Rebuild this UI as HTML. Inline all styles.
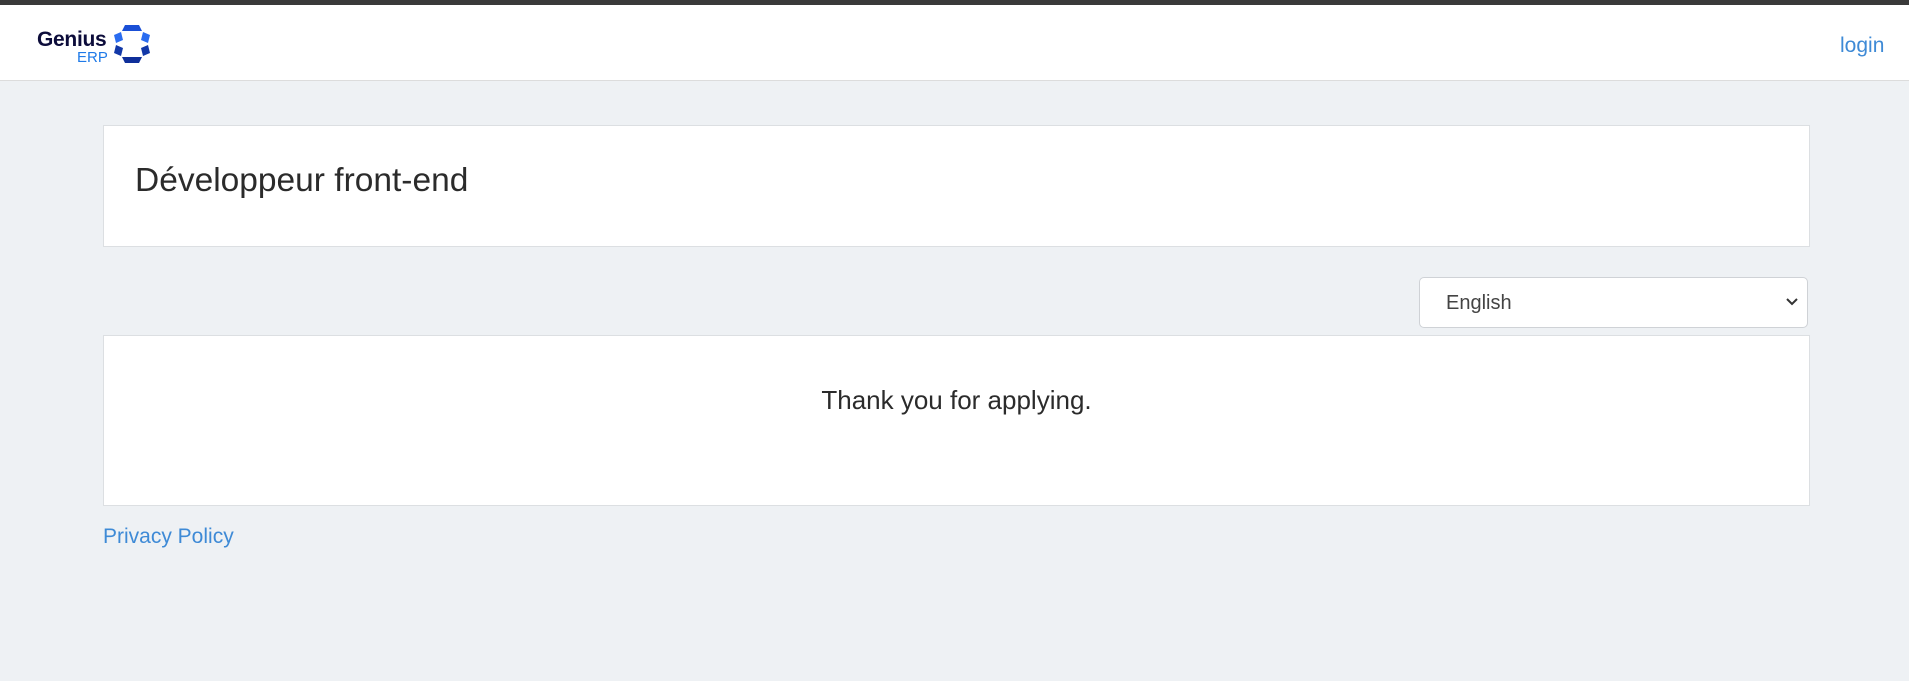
<!DOCTYPE html>
<html><head><meta charset="utf-8"><style>
*{box-sizing:border-box;margin:0;padding:0}
body{width:1909px;height:681px;background:#eef1f4;font-family:"Liberation Sans",sans-serif;color:#333;position:relative;overflow:hidden}
.top{position:absolute;left:0;top:0;width:1909px;height:5px;background:#3a3a3a}
.hdr{position:absolute;left:0;top:5px;width:1909px;height:76px;background:#fff;border-bottom:1px solid #dcdcdc}
.card{position:absolute;left:103px;width:1707px;background:#fff;border:1px solid #dcdfe2}
a{color:#3e8ad6;text-decoration:none}
</style></head><body>
<div class="top"></div>
<div class="hdr">
  <div style="position:absolute;left:37px;top:23px;font-weight:bold;font-size:21px;color:#0c0c3a;letter-spacing:-0.3px">Genius</div>
  <div style="position:absolute;left:77px;top:44px;font-size:15px;color:#1f7ae8">ERP</div>
  <svg style="position:absolute;left:112px;top:18px" width="40" height="42" viewBox="0 0 40 42">
    <g>
      <path d="M13 2 L27 2 L30 8 L10 8Z" fill="#1a4fd6"/>
      <path d="M13 40 L27 40 L30 34 L10 34Z" fill="#0f2f9a"/>
      <path d="M2 12 L9 9 L11 17 L4 20Z" fill="#2a6cf0"/>
      <path d="M38 12 L31 9 L29 17 L36 20Z" fill="#2a6cf0"/>
      <path d="M2 30 L9 33 L11 25 L4 22Z" fill="#1238a8"/>
      <path d="M38 30 L31 33 L29 25 L36 22Z" fill="#1238a8"/>
    </g>
  </svg>
  <a style="position:absolute;left:1840px;top:29px;font-size:21px">login</a>
</div>
<div class="card" style="top:125px;height:122px">
  <div style="position:absolute;left:31px;top:36px;font-size:33.5px;color:#2b2b2b">Développeur front-end</div>
</div>
<div style="position:absolute;left:1419px;top:277px;width:389px;height:51px;background:#fff;border:1px solid #cfd2d6;border-radius:5px">
  <div style="position:absolute;left:26px;top:14px;font-size:20px;color:#444">English</div>
  <svg style="position:absolute;right:8px;top:19px" width="14" height="10" viewBox="0 0 14 10"><path d="M2 2 L7 7 L12 2" stroke="#333" stroke-width="2" fill="none"/></svg>
</div>
<div class="card" style="top:335px;height:171px">
  <div style="position:absolute;left:0;width:100%;top:49px;text-align:center;font-size:26px;color:#2b2b2b">Thank you for applying.</div>
</div>
<a style="position:absolute;left:103px;top:525px;font-size:21px">Privacy Policy</a>
</body></html>
